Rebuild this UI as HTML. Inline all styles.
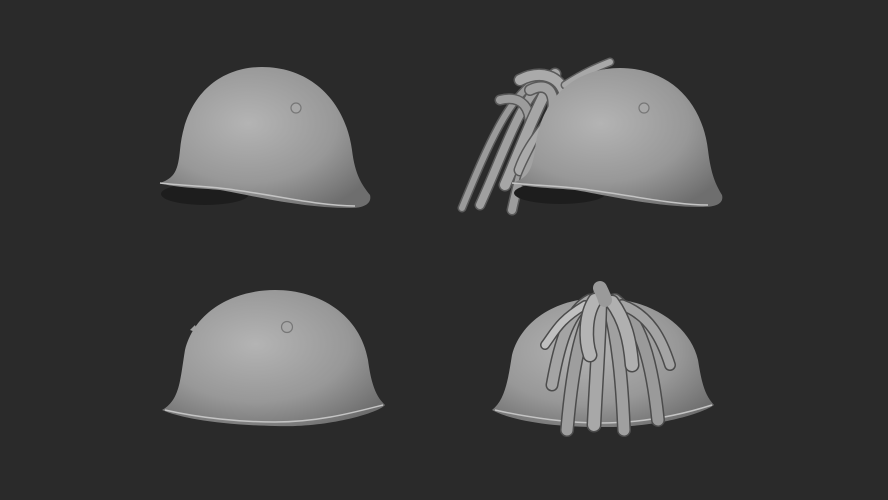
<!DOCTYPE html>
<html><head><style>
html,body{margin:0;padding:0;background:#2a2a2a;}
svg{display:block}
</style></head><body>
<svg width="888" height="500" viewBox="0 0 888 500" xmlns="http://www.w3.org/2000/svg">
<defs>
<radialGradient id="g" cx="0.42" cy="0.4" r="0.7">
<stop offset="0" stop-color="#b4b4b4"/><stop offset="0.6" stop-color="#989898"/><stop offset="1" stop-color="#6e6e6e"/>
</radialGradient>
</defs>
<rect width="888" height="500" fill="#2a2a2a"/>

<!-- helmet 1 -->
<ellipse cx="205" cy="194" rx="44" ry="11" fill="#1d1d1d"/>
<path d="M160,183 C175,178 178,170 180,150 C185,95 220,67 262,67 C310,67 345,100 352,150 C355,175 362,185 370,195 C372,203 365,208 350,208 C300,208 250,195 220,190 C200,188 175,188 160,183 Z" fill="url(#g)"/>
<path d="M160,183 C185,186 210,186 235,190 C280,196 320,206 355,206" fill="none" stroke="#c4c4c4" stroke-width="1.5"/>
<circle cx="296" cy="108" r="5" fill="#a8a8a8" stroke="#777" stroke-width="1.2"/>

<!-- helmet 2 hair back -->
<g fill="none" stroke-linecap="round">
<path d="M540,78 C510,95 490,140 462,208" stroke="#5a5a5a" stroke-width="9"/>
<path d="M540,78 C510,95 490,140 462,208" stroke="#9a9a9a" stroke-width="6"/>
<path d="M548,76 C520,100 505,150 480,205" stroke="#5a5a5a" stroke-width="11"/>
<path d="M548,76 C520,100 505,150 480,205" stroke="#a0a0a0" stroke-width="8"/>
<path d="M500,100 C520,95 535,105 528,140 C522,170 515,195 512,210" stroke="#5a5a5a" stroke-width="11"/>
<path d="M500,100 C520,95 535,105 528,140 C522,170 515,195 512,210" stroke="#9c9c9c" stroke-width="8"/>
<path d="M555,74 C535,110 520,150 505,185" stroke="#5a5a5a" stroke-width="13"/>
<path d="M555,74 C535,110 520,150 505,185" stroke="#a6a6a6" stroke-width="10"/>
<path d="M520,80 C540,70 560,75 565,95 C555,120 530,140 520,170" stroke="#5a5a5a" stroke-width="13"/>
<path d="M520,80 C540,70 560,75 565,95 C555,120 530,140 520,170" stroke="#aaaaaa" stroke-width="10"/>
<path d="M530,90 C550,80 560,95 548,130 C540,150 530,165 525,180" stroke="#5a5a5a" stroke-width="12"/>
<path d="M530,90 C550,80 560,95 548,130 C540,150 530,165 525,180" stroke="#a2a2a2" stroke-width="9"/>
<path d="M565,85 C585,72 600,66 610,62" stroke="#606060" stroke-width="9"/>
<path d="M565,85 C585,72 600,66 610,62" stroke="#a8a8a8" stroke-width="6"/>
</g>
<!-- helmet 2 -->
<ellipse cx="560" cy="193" rx="46" ry="11" fill="#1d1d1d"/>
<path d="M512,183 C528,178 532,170 535,150 C540,98 575,68 620,68 C668,68 702,100 708,150 C711,175 716,185 722,195 C724,203 717,207 703,207 C655,207 605,195 575,190 C555,188 528,188 512,183 Z" fill="url(#g)"/>
<path d="M512,183 C540,186 565,186 590,190 C635,196 675,205 708,205" fill="none" stroke="#c4c4c4" stroke-width="1.5"/>
<circle cx="644" cy="108" r="5" fill="#a8a8a8" stroke="#777" stroke-width="1.2"/>

<!-- helmet 3 -->
<path d="M162,410 C180,400 180,380 185,350 C195,310 235,290 275,290 C320,290 360,315 368,360 C372,390 378,398 385,405 C380,412 330,428 275,426 C220,425 180,418 162,410 Z" fill="url(#g)"/>
<path d="M165,410 C200,418 240,422 275,422 C320,422 355,412 383,405" fill="none" stroke="#c4c4c4" stroke-width="1.5"/>
<path d="M190,330 l5,-5 l3,8 z" fill="#a0a0a0"/>
<circle cx="287" cy="327" r="5.5" fill="#a8a8a8" stroke="#777" stroke-width="1.2"/>

<!-- helmet 4 -->
<path d="M492,410 C505,400 508,380 512,355 C522,318 560,298 600,298 C650,298 690,325 698,360 C702,385 705,395 714,405 C705,412 660,428 600,427 C550,427 510,420 492,410 Z" fill="url(#g)"/>
<path d="M495,410 C530,418 570,423 600,423 C650,423 690,412 712,405" fill="none" stroke="#c4c4c4" stroke-width="1.5"/>
<g fill="none" stroke-linecap="round">
<path d="M590,300 C570,310 560,340 552,385" stroke="#4c4c4c" stroke-width="13"/>
<path d="M590,300 C570,310 560,340 552,385" stroke="#a4a4a4" stroke-width="10"/>
<path d="M596,300 C580,330 572,370 567,430" stroke="#4c4c4c" stroke-width="14"/>
<path d="M596,300 C580,330 572,370 567,430" stroke="#9e9e9e" stroke-width="11"/>
<path d="M608,300 C618,340 622,380 624,430" stroke="#4c4c4c" stroke-width="14"/>
<path d="M608,300 C618,340 622,380 624,430" stroke="#a0a0a0" stroke-width="11"/>
<path d="M615,300 C640,320 652,360 658,420" stroke="#4c4c4c" stroke-width="14"/>
<path d="M615,300 C640,320 652,360 658,420" stroke="#9a9a9a" stroke-width="11"/>
<path d="M600,295 C600,330 596,380 594,425" stroke="#4c4c4c" stroke-width="15"/>
<path d="M600,295 C600,330 596,380 594,425" stroke="#a8a8a8" stroke-width="12"/>
<path d="M622,305 C650,315 662,340 670,365" stroke="#4c4c4c" stroke-width="12"/>
<path d="M622,305 C650,315 662,340 670,365" stroke="#a4a4a4" stroke-width="9"/>
<path d="M585,305 C560,320 556,330 545,345" stroke="#4c4c4c" stroke-width="10"/>
<path d="M585,305 C560,320 556,330 545,345" stroke="#c0c0c0" stroke-width="7"/>
<path d="M595,300 C585,315 585,340 590,355" stroke="#4c4c4c" stroke-width="15"/>
<path d="M595,300 C585,315 585,340 590,355" stroke="#b4b4b4" stroke-width="12"/>
<path d="M612,302 C625,320 630,340 632,365" stroke="#4c4c4c" stroke-width="15"/>
<path d="M612,302 C625,320 630,340 632,365" stroke="#b0b0b0" stroke-width="12"/>
<path d="M600,288 C602,292 604,296 605,300" stroke="#9a9a9a" stroke-width="14"/>
</g>
</svg>
</body></html>
